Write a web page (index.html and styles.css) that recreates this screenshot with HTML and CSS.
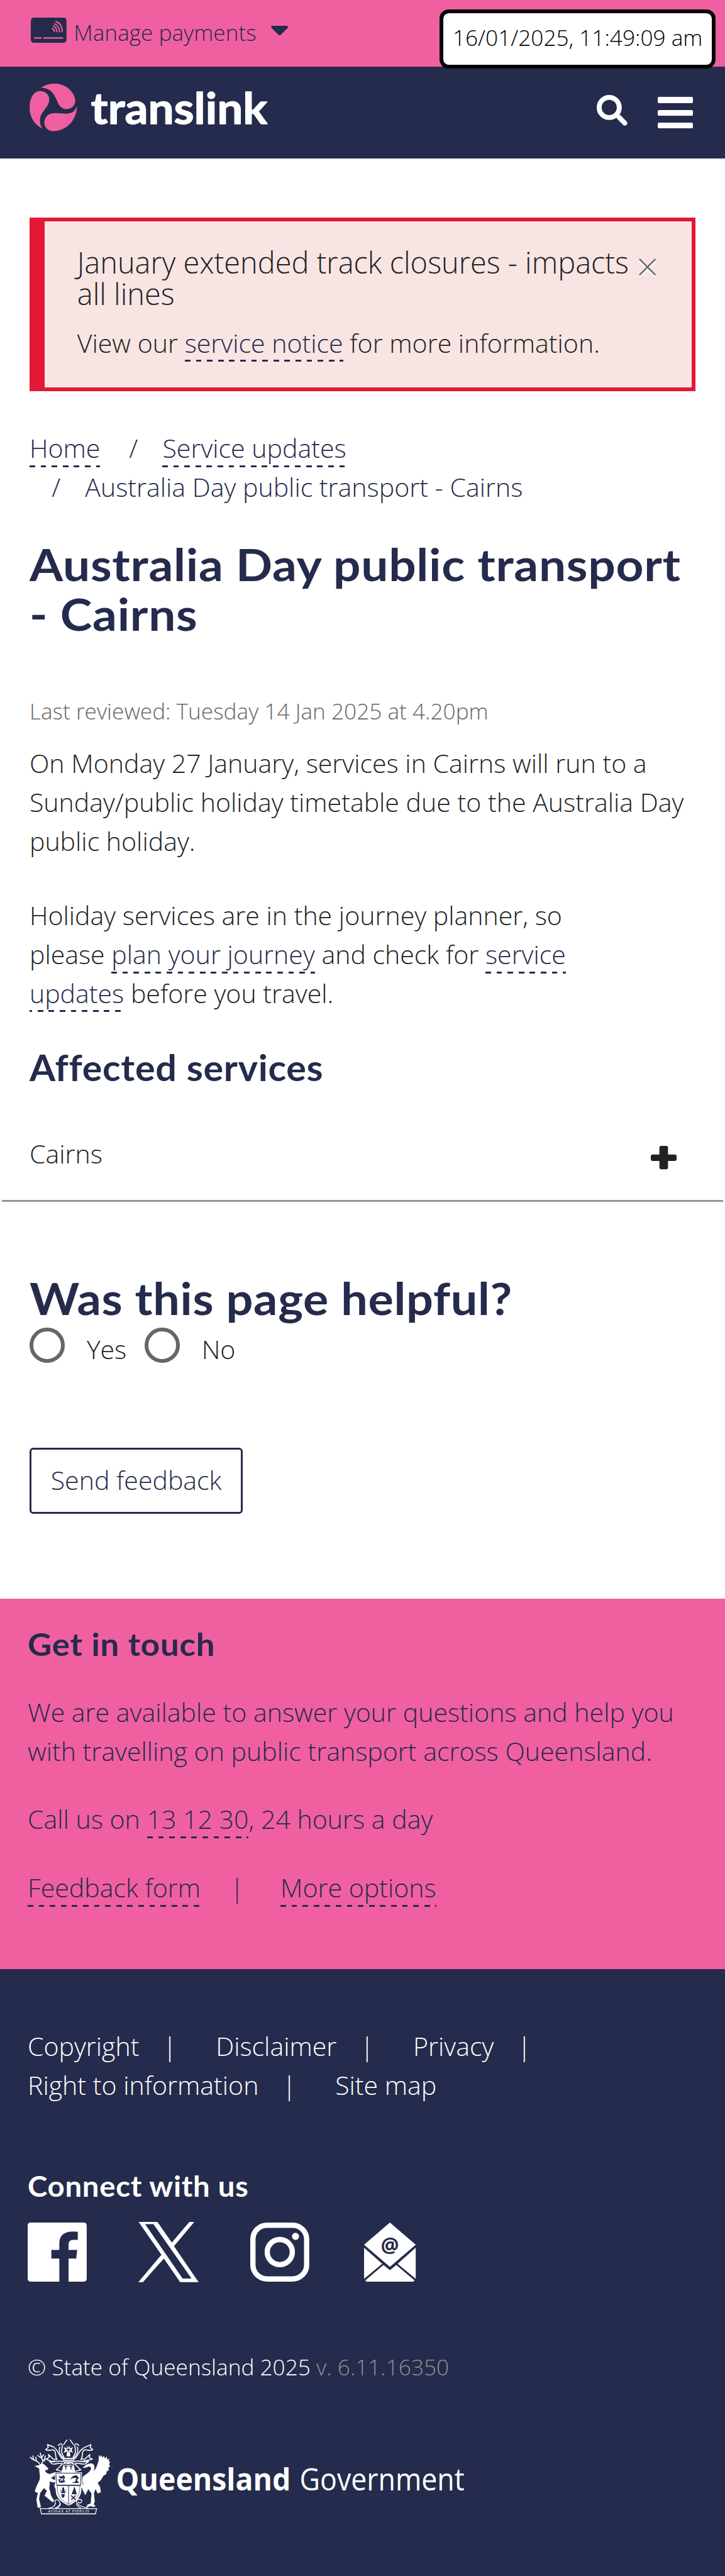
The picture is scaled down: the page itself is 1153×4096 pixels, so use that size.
FILE: index.html
```
<!DOCTYPE html>
<html lang="en">
<head>
<meta charset="utf-8">
<title>Australia Day public transport - Cairns | Translink</title>
<link rel="stylesheet" href="styles.css">
</head>
<body>
<div class="topbar">
  <svg class="card-icon" viewBox="0 0 174 123">
    <rect width="174" height="123" rx="15" fill="#252b4c"/>
    <g fill="none" stroke="#f060a1" stroke-linecap="round">
      <path stroke-width="7" d="M19 99.500H50M64 99.500H155"/>
      <path stroke-width="6" d="M105 53Q115 57 115 69M110 41Q127 48 127 69M115 30Q139 40 140 69M122 19Q154 29 153 69"/>
    </g>
  </svg>
  <span class="payments">Manage payments</span>
  <svg class="caret" viewBox="0 0 28 16"><path d="M2 0H26Q29 1 27 3.500L15.500 15Q14 16 12.500 15L1 3.500Q-1 1 2 0Z" fill="#252b4c"/></svg>
  <div class="clock">16/01/2025, 11:49:09 am</div>
</div>
<header class="header">
  <svg class="logo" viewBox="144 410 1170 235">
    <g fill="#f060a1">
      <path d="M198 430C240 403 290 406 322 425C348 440 366 470 367 492C366 520 345 535 320 534C295 531 286 512 277 492C262 459 246 430 198 430Z"/>
      <path d="M195 446C225 447 241 467 240 492C236 522 209 540 198 568C190 592 195 610 206 629C170 612 144 575 144 528C144 480 165 446 195 446Z"/>
      <path d="M375 520C375 590 320 642 262 642C232 642 216 622 216 600C216 575 232 555 262 554C310 552 355 574 375 520Z"/>
    </g>
    <text class="logo-text" x="443" y="606" textLength="862" lengthAdjust="spacingAndGlyphs">translink</text>
  </svg>
  <div class="header-actions">
    <svg class="search" viewBox="0 0 150 150"><circle cx="61" cy="61" r="49" fill="none" stroke="#fff" stroke-width="24"/><path d="M109 109L137 137" stroke="#fff" stroke-width="24" stroke-linecap="round"/></svg>
    <div class="burger"><i></i><i></i><i></i></div>
  </div>
</header>
<main class="main">
  <section class="alert">
    <div class="alert-body">
      <h2>January extended track closures - impacts<br>all lines</h2>
      <p>View our <a>service notice</a> for more information.</p>
    </div>
    <svg class="close" viewBox="0 0 28 30"><path d="M1 4L27 30M27 4L1 30" stroke="#fff" stroke-width="2.500"/><path d="M1 1L27 27M27 1L1 27" stroke="#666" stroke-width="2.500"/></svg>
  </section>
  <ol class="crumbs">
    <li><a>Home</a></li>
    <li class="sub"><a>Service updates</a></li>
    <li class="sub wrap">Australia Day public transport - Cairns</li>
  </ol>
  <h1>Australia Day public transport<br>- Cairns</h1>
  <p class="reviewed">Last reviewed: Tuesday 14 Jan 2025 at 4.20pm</p>
  <p class="intro">On Monday 27 January, services in Cairns will run to a Sunday/public holiday timetable due to the Australia Day public holiday.</p>
  <p class="planner">Holiday services are in the journey planner, so please <a>plan your journey</a> and check for <a>service updates</a> before you travel.</p>
  <h2 class="affected">Affected services</h2>
  <div class="accordion">
    <span>Cairns</span>
    <svg class="plus" viewBox="0 0 42 38"><rect x="14" width="14" height="38" rx="3" fill="#222"/><rect y="14" width="42" height="10.500" rx="3" fill="#222"/></svg>
  </div>
  <h2 class="helpful">Was this page helpful?</h2>
  <div class="radios">
    <label><i></i>Yes</label>
    <label><i></i>No</label>
  </div>
  <button class="send">Send feedback</button>
</main>
<section class="touch">
  <h2>Get in touch</h2>
  <p>We are available to answer your questions and help you with travelling on public transport across Queensland.</p>
  <p>Call us on <a>13 12 30</a>, 24 hours a day</p>
  <p class="touch-links"><a>Feedback form</a><span>|</span><a>More options</a></p>
</section>
<footer class="footer">
  <div class="links"><span>Copyright</span><b>|</b><span>Disclaimer</span><b>|</b><span>Privacy</span><b>|</b></div>
  <div class="links"><span>Right to information</span><b>|</b><span>Site map</span></div>
  <h2>Connect with us</h2>
  <div class="social">
    <svg viewBox="0 0 96 96"><path fill="#fff" d="M5 0H91Q96 0 96 5V91Q96 96 91 96H66.500V58.500H79L80.500 44.500H66.500V36Q66.500 28 74 28H81.500V15C62 12.500 51.500 19 51.500 34V44.500H38.500V58.500H51.500V96H5Q0 96 0 91V5Q0 0 5 0Z"/></svg>
    <svg class="x" viewBox="0 0 98 98"><path fill="#fff" fill-rule="evenodd" d="M0.500 0H31L54.500 33.500L83 0H91L58 39.500L98 98H68L41.500 59.500L7.500 98H0L37.500 53.500ZM11 3.500L72 92H86.500L24.500 3.500Z"/></svg>
    <svg viewBox="0 0 96 96"><rect x="4.300" y="4.300" width="87.400" height="87.400" rx="23" fill="none" stroke="#fff" stroke-width="8.600"/><circle cx="48" cy="48" r="20.400" fill="none" stroke="#fff" stroke-width="8.600"/><circle cx="73.600" cy="22.400" r="5.800" fill="#fff"/></svg>
    <svg class="mail" viewBox="0 0 84 96"><g fill="#fff"><path d="M42 0L84 36L42 72L0 36Z"/><path d="M0 41L29.500 67L0 91.500Z"/><path d="M84 41L54.500 67L84 91.500Z"/><path d="M31.500 69L42 77.500L52.500 69L82 94Q81 96 79 96H5Q3 96 2 94Z"/></g><text class="at" x="42" y="48" text-anchor="middle">@</text></svg>
  </div>
  <p class="copyright">© State of Queensland 2025 <span>v. 6.11.16350</span></p>
  <svg class="gov" viewBox="144 105 2136 370">
    <!-- deer -->
    <g fill="none" stroke="#fff" stroke-width="5" stroke-linecap="round" stroke-linejoin="round">
      <path d="M192 226C184 208 160 214 148 194M164 208L160 188M177 212L174 194M202 226C216 216 200 196 196 174M203 200L184 186M207 212L221 202M203 196L212 182M216 214L220 188"/>
    </g>
    <path fill="#fff" d="M168 237L190 233C196 224 212 224 218 232L236 249L230 257L219 258C221 268 230 275 242 276L268 268L270 281L248 297L276 310L262 318L240 313C246 326 239 339 240 349C247 361 244 375 252 387L264 407L255 414L244 404L232 394L217 382L228 358L214 345L196 368L190 397L198 432V440H183L177 402L184 370L169 362C176 338 183 325 192 306C198 288 190 268 191 250Z"/>
    <!-- brolga -->
    <path fill="#fff" d="M482 182L488 193L494 184L499 196L507 188L511 201L520 191L522 206L532 200L530 214L538 218L531 228L537 238L528 246L531 258L520 264L518 277L504 285L492 306L476 320L488 340L492 365L476 372L466 350L458 370L462 412L456 424L466 432L458 437L441 433L420 439L426 426L442 420L446 371L430 350L416 380L404 357L398 340L407 325L400 312L403 290C416 280 440 265 444 250C445 239 430 237 425 243L402 248C415 232 432 222 447 225C465 230 462 250 455 263L468 248L480 215Z"/>
    <!-- crest and mantling -->
    <g fill="none" stroke="#fff" stroke-width="5" stroke-linecap="round" stroke-linejoin="round">
      <path d="M326 110L310 133M342 110L358 133M284 137C298 120 306 132 302 149C297 175 305 182 312 196M384 137C370 120 362 132 366 149C371 175 363 182 356 196M291 145C284 165 296 187 310 201M377 145C384 165 372 187 358 201"/>
      <path d="M308 205C284 188 286 158 258 143L231 133L235 147L222 157C243 169 253 149 266 163C276 179 266 195 278 205L258 203L236 181L239 195L226 204C246 215 258 218 266 212M360 205C384 188 382 158 416 145L443 133L440 147L452 157C431 169 418 149 406 163C396 179 406 195 394 205L414 203L438 181L435 195L450 204C428 208 420 213 408 212"/>
      <path d="M306 216C284 207 270 221 241 215L255 227C272 232 286 218 304 226M362 216C382 207 398 221 432 215L416 227C396 232 382 218 364 226M303 228C291 238 286 250 274 256L300 263M365 228C377 238 382 250 394 256L368 263"/>
      <path d="M309 201H359M309 212H359" stroke-width="7"/>
    </g>
    <path fill="#fff" d="M326 138L333 148L341 138L340 152L356 145L349 159L356 173L340 166L343 190H324L327 166L310 173L317 159L310 145L327 152ZM311 218H357L367 268H300Z"/>
    <path d="M324 158H343M333 149V169M321 230V255M314 239H328M346 230V255M339 239H353" stroke="#252b4c" stroke-width="4"/>
    <path d="M310 235Q320 220 333 233Q346 220 357 235" fill="none" stroke="#252b4c" stroke-width="4"/>
    <!-- shield -->
    <path fill="#fff" d="M267 268H399V315Q410 328 397 345Q399 402 334 431Q268 402 271 350Q260 335 269 320Z"/>
    <path d="M272 272H394V330H276ZM276 333H394M334 333V426" fill="none" stroke="#252b4c" stroke-width="3"/>
    <path d="M279 335Q272 392 334 425Q396 390 389 335" fill="none" stroke="#252b4c" stroke-width="2"/>
    <g fill="#252b4c">
      <path d="M287 284L297 289L310 282L317 292L311 305L319 313L304 319L289 318L283 302L292 303Z"/>
      <path d="M342 304Q352 280 374 283L384 295L375 307L386 320H350L368 312L369 296Q354 292 342 304Z"/>
      <path d="M293 347L301 366L304 342H312L315 366L322 347L318 370H298ZM298 375H316L312 391H302ZM363 337L374 375H349Z"/>
    </g>
    <g fill="none" stroke="#fff" stroke-width="4"><path d="M291 297L307 308M292 311L309 296M357 302L373 299"/></g>
    <path d="M346 381L369 402M369 381L347 402" stroke="#252b4c" stroke-width="5"/>
    <!-- scroll -->
    <g fill="none" stroke="#fff" stroke-width="4"><path d="M196 445H471L465 471H202ZM237 443C260 440 271 430 269 414C263 402 278 396 288 408C300 424 284 438 268 443M431 443C408 440 382 430 373 414C370 400 388 395 398 405C402 418 386 421 380 412M296 420C292 435 284 440 276 443M372 420C378 435 384 440 396 443"/></g>
    <text class="motto" x="233" y="465" textLength="202">AUDAX AT FIDELIS</text>
    <text class="gov-bold" x="566" y="358" textLength="852" lengthAdjust="spacingAndGlyphs">Queensland</text>
    <text class="gov-light" x="1462" y="358" textLength="804" lengthAdjust="spacingAndGlyphs">Government</text>
  </svg>
</footer>
</body>
</html>
```
FILE: styles.css
```
* { box-sizing: border-box; }
html { background: #252b4c; }
body {
  zoom: 0.97798;
  margin: 0;
  background: #fff;
  color: #222;
  font: 300 42px/63px "Open Sans", sans-serif;
}
h1, h2, p, ol { margin: 0; padding: 0; }
svg { display: block; flex: none; overflow: visible; }
h1, h2 {
  font-family: Lato, sans-serif;
  font-weight: 700;
  font-variant-ligatures: none;
  letter-spacing: 0.7px;
  transform-origin: 0 50%;
  color: #252b4c;
}
a {
  color: #252b4c;
  padding-bottom: 3px;
  background: repeating-linear-gradient(90deg, #252b4c 0 9px, transparent 9px 18px) 0 100% / 100% 3.100px no-repeat;
}

.topbar {
  position: relative;
  display: flex;
  align-items: flex-start;
  height: 108px;
  padding: 25px 0 0 50px;
  background: #f060a1;
  color: #252b4c;
  font-size: 36px;
  line-height: 54px;
}
.card-icon { width: 58px; height: 41px; margin: 4px 12px 0 0; }
.payments { width: 321px; padding-top: 1px; white-space: nowrap; }
.caret { width: 28px; height: 16px; margin-top: 17px; }
.clock {
  position: absolute;
  left: 715px;
  top: 15px;
  width: 449px;
  height: 96px;
  padding: 13px 0 0 15px;
  border: 6.200px solid #000;
  border-radius: 15px;
  background: #fff;
  color: #000;
  white-space: nowrap;
}

.header {
  display: flex;
  justify-content: space-between;
  align-items: flex-start;
  height: 150px;
  padding: 28.500px 52px 0 48px;
  background: #252b4c;
}
.logo { width: 390px; height: 78.300px; }
.logo-text {
  font: 700 212px Lato, sans-serif;
  fill: #fff;
  stroke: #fff;
  stroke-width: 4px;
  stroke-linejoin: round;
}
.header-actions { display: flex; gap: 50px; padding-top: 17.500px; }
.search { width: 50px; height: 50px; }
.burger { display: flex; flex-direction: column; gap: 10.500px; width: 57px; padding-top: 4px; }
.burger i { height: 10px; border-radius: 2px; background: #fff; }

.main { padding: 96px 48px 0; height: 2341px; }
.alert {
  display: flex;
  height: 282px;
  padding: 41.500px 0 0 53px;
  border: 6.200px solid #e31837;
  border-left-width: 24.600px;
  background: #f8e5e3;
}
.alert-body { width: 913px; white-space: nowrap; }
.alert h2 { font: 300 48px/51px "Open Sans", sans-serif; letter-spacing: 0; color: #222; margin-bottom: 22.500px; }
.close { width: 28px; height: 30px; margin-top: 18.500px; }

.crumbs { list-style: none; display: flex; flex-wrap: wrap; margin-top: 61.500px; color: #252b4c; }
.crumbs .sub { padding-left: 47px; }
.crumbs .sub::before { content: "/"; margin-right: 40px; }
.crumbs .wrap { width: 100%; padding-left: 36px; }

h1 { margin-top: 52.500px; font-size: 73px; line-height: 81px; white-space: nowrap; transform: scaleX(1.073); }
.reviewed { margin-top: 90.500px; font-size: 36px; line-height: 54px; color: #666; }
.intro { margin-top: 27.500px; }
.planner { width: 960px; margin-top: 58.500px; }
.affected { margin-top: 52.500px; font-size: 58px; line-height: 72px; transform: scaleX(1.045); }
.accordion {
  display: flex;
  justify-content: space-between;
  height: 111px;
  margin: 72.500px -45px 0;
  padding: 1px 76px 0 45px;
  border-bottom: 3.100px solid #969696;
}
.plus { width: 42px; height: 38px; margin-top: 19px; }
.helpful { margin-top: 115px; font-size: 73px; line-height: 81px; transform: scaleX(1.058); }
.radios { display: flex; margin-top: 8px; }
.radios label { display: flex; width: 187px; padding-top: 4px; }
.radios i { width: 57px; height: 57px; margin: -4px 36px 0 0; border: 6.200px solid #666; border-radius: 50%; }
.send {
  display: block;
  width: 347px;
  height: 108px;
  margin-top: 128px;
  padding: 0 0 1px;
  border: 3.100px solid #252b4c;
  border-radius: 6px;
  background: #fff;
  color: #252b4c;
  font: inherit;
}

.touch { height: 603px; padding: 43px 45px 0; background: #f060a1; color: #252b4c; }
.touch h2 { font-size: 51px; line-height: 63px; transform: scaleX(1.06); }
.touch p { margin-top: 48px; }
.touch-links { display: flex; }
.touch-links a { height: 63px; padding: 0; background-position: 0 calc(100% - 0.500px); }
.touch-links span { margin: 0 59px 0 48px; }

.footer { height: 986px; padding: 94px 45px 0; background: #252b4c; color: #fff; }
.links { display: flex; }
.links b { font-weight: 300; margin: 0 63.500px 0 38.300px; }
.footer h2 { margin-top: 102.500px; color: #fff; font-size: 46px; line-height: 60px; transform: scaleX(1.052); }
.social { display: flex; margin-top: 29px; gap: 84px; }
.social svg { width: 96px; height: 96px; }
.social .x { width: 98px; height: 98px; margin: -1px 0 0; }
.social .mail { width: 84px; margin-left: 5.500px; }
.social svg:nth-child(3) { margin-left: -0.500px; }
.at { font: 700 33px "Open Sans", sans-serif; fill: #252b4c; }
.copyright { margin-top: 111px; font-size: 36px; line-height: 54px; }
.copyright span { color: #8e8f8d; }
.gov { width: 712px; height: 123.300px; margin: 90px 0 0 3px; }
.motto { font: 400 20px "Liberation Serif", serif; fill: #fff; }
.gov-bold { font: 700 150px "Open Sans", sans-serif; fill: #fff; }
.gov-light { font: 400 150px "Open Sans", sans-serif; fill: #fff; }
```
